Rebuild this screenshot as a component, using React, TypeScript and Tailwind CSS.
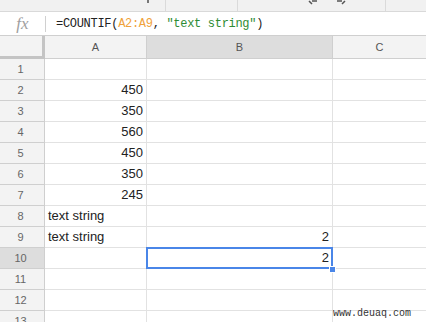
import React from 'react';

const rows: { a: string; b: string; alignA: 'left' | 'right' }[] = [
  { a: '', b: '', alignA: 'right' },
  { a: '450', b: '', alignA: 'right' },
  { a: '350', b: '', alignA: 'right' },
  { a: '560', b: '', alignA: 'right' },
  { a: '450', b: '', alignA: 'right' },
  { a: '350', b: '', alignA: 'right' },
  { a: '245', b: '', alignA: 'right' },
  { a: 'text string', b: '', alignA: 'left' },
  { a: 'text string', b: '2', alignA: 'left' },
  { a: '', b: '2', alignA: 'left' },
  { a: '', b: '', alignA: 'left' },
  { a: '', b: '', alignA: 'left' },
  { a: '', b: '', alignA: 'left' },
];

const App: React.FC = () => {
  return (
    <div className="relative w-[426px] h-[322px] overflow-hidden bg-white font-['Liberation_Sans',Arial,sans-serif]">
      {/* Toolbar strip (cut off at the top) */}
      <div className="flex h-[12px] bg-[#f1f1f1] border-b border-[#d9d9d9]">
        <div className="w-[165px] relative">
          <span className="absolute left-[147px] top-0 w-[2px] h-[3px] bg-[#777]" />
        </div>
        <div className="w-[72px] border-l border-[#dadada]" />
        <div className="w-[148px] border-l border-[#dadada] relative">
          <svg className="absolute left-[70px] top-0" width="10" height="5" viewBox="0 0 10 5">
            <path d="M1 1 L4 4 M4 1 H9" stroke="#555" strokeWidth="1.5" fill="none" />
          </svg>
          <svg className="absolute left-[98px] top-0" width="10" height="5" viewBox="0 0 10 5">
            <path d="M9 1 L6 4 M6 1 H1" stroke="#555" strokeWidth="1.5" fill="none" />
          </svg>
        </div>
        <div className="flex-1 border-l border-[#dadada]" />
      </div>

      {/* Formula bar */}
      <div className="flex items-center h-[23px] bg-white">
        <div className="w-[45px] flex justify-center items-center">
          <span className="font-['Liberation_Serif',serif] italic text-[17px] text-[#a0a0a0] leading-none">fx</span>
        </div>
        <div className="w-px h-[16px] bg-[#d0d0d0]" />
        <div className="pl-[10px] font-['Liberation_Mono',monospace] text-[12px] tracking-[-0.3px] text-[#222] whitespace-pre">
          =COUNTIF(<span className="text-[#f0a23b]">A2:A9</span>, <span className="text-[#2e8b34]">"text string"</span>)
        </div>
      </div>

      {/* Column headers */}
      <div className="flex h-[24px] border-t border-[#cfcfcf] text-[11px] text-[#555]">
        <div className="w-[45px] bg-[#f3f3f3] border-r-[3px] border-b-[3px] border-[#c4c4c4]" />
        <div className="w-[102px] bg-[#f3f3f3] border-r border-b border-[#cfcfcf] flex items-center justify-center">A</div>
        <div className="w-[186px] bg-[#dddddd] border-r border-b border-[#cfcfcf] flex items-center justify-center">B</div>
        <div className="flex-1 bg-[#f3f3f3] border-b border-[#cfcfcf] flex items-center justify-center">C</div>
      </div>

      {/* Rows */}
      {rows.map((r, i) => {
        const n = i + 1;
        const selected = n === 10;
        return (
          <div key={n} className="flex h-[21px]">
            <div
              className={`w-[45px] border-r border-b border-[#cfcfcf] flex items-center justify-center pr-[3px] text-[11px] text-[#666] ${
                selected ? 'bg-[#dddddd]' : 'bg-[#f3f3f3]'
              }`}
            >
              {n}
            </div>
            <div
              className={`w-[102px] border-r border-b border-[#e2e2e2] flex items-center px-[3px] text-[13px] text-[#222] ${
                r.alignA === 'right' ? 'justify-end' : 'justify-start'
              }`}
            >
              {r.a}
            </div>
            <div className="relative w-[186px] border-r border-b border-[#e2e2e2] flex items-center justify-end px-[3px] text-[13px] text-[#222]">
              {r.b}
              {selected && (
                <>
                  <div className="absolute -left-px -top-px -right-px -bottom-px border-2 border-[#4a86e8]" />
                  <div className="absolute z-10 -right-[4px] -bottom-[5px] w-[7px] h-[7px] bg-[#4a86e8] border border-white" />
                </>
              )}
            </div>
            <div className="flex-1 border-b border-[#e2e2e2]" />
          </div>
        );
      })}

      <span className="absolute left-[333px] top-[309px] font-['Liberation_Mono',monospace] text-[10px] text-[#333] leading-none">
        www.deuaq.com
      </span>
    </div>
  );
};

export default App;
